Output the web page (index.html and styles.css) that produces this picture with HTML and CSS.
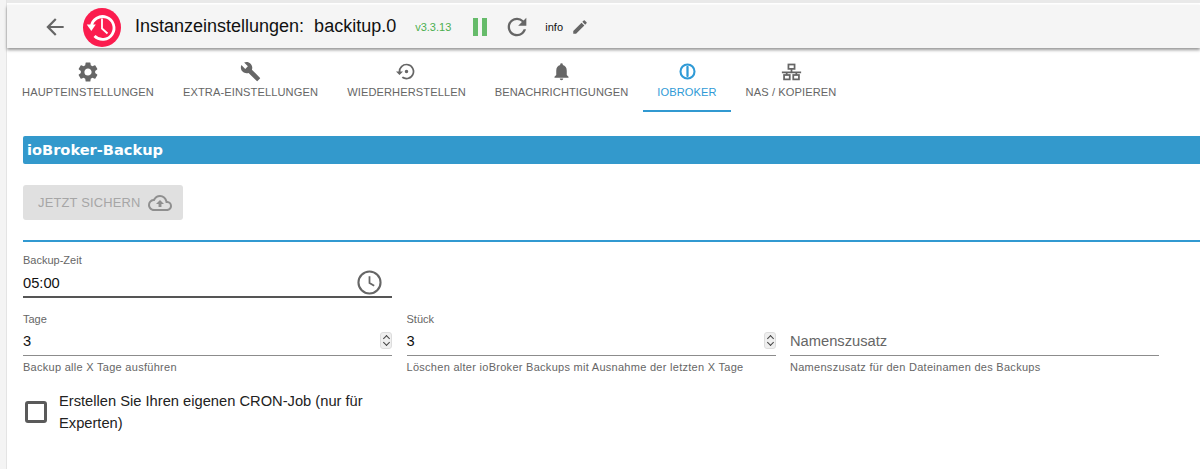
FILE: index.html
```html
<!DOCTYPE html>
<html lang="de">
<head>
<meta charset="utf-8">
<title>Instanzeinstellungen</title>
<link rel="stylesheet" href="styles.css">
</head>
<body>
<div class="page">
  <header class="toolbar">
    <svg class="back" viewBox="0 0 24 24"><path d="M20 11H7.830l5.590-5.590L12 4l-8 8 8 8 1.410-1.410L7.830 13H20v-2z"/></svg>
    <div class="logo">
      <svg viewBox="0 0 38 39"><ellipse cx="19" cy="19.500" rx="19" ry="19.500" fill="#fb1c4e"/><path d="M8.300 18.500A11.400 11.400 0 1 1 11.500 28" fill="none" stroke="#fff" stroke-width="2.800"/><path d="M3.800 16.500h9l-4.500 6.500z" fill="#fff"/><path d="M19 10.500v10l5.500 5" fill="none" stroke="#fff" stroke-width="1.800"/></svg>
    </div>
    <h1 class="title">Instanzeinstellungen:&nbsp; backitup.0</h1>
    <span class="version">v3.3.13</span>
    <span class="pause"><i></i><i></i></span>
    <svg class="reload" viewBox="0 0 24 24"><path d="M17.650 6.350A7.958 7.958 0 0 0 12 4c-4.420 0-7.990 3.580-7.990 8s3.570 8 7.990 8c3.730 0 6.840-2.550 7.730-6h-2.080A5.990 5.990 0 0 1 12 18c-3.310 0-6-2.690-6-6s2.690-6 6-6c1.660 0 3.140.69 4.220 1.780L13 11h7V4l-2.350 2.350z"/></svg>
    <span class="level">info</span>
    <svg class="pencil" viewBox="0 0 24 24"><path d="M3 17.250V21h3.750L17.810 9.940l-3.750-3.750L3 17.250zM20.710 7.040a1 1 0 0 0 0-1.410l-2.340-2.340a1 1 0 0 0-1.410 0l-1.830 1.830 3.750 3.750 1.830-1.830z"/></svg>
  </header>

  <nav class="tabs">
    <div class="tab tab-main">
      <svg class="gear" viewBox="0 0 24 24"><path d="M19.140 12.940c.04-.3.060-.61.060-.94s-.02-.64-.07-.94l2.030-1.580a.49.490 0 0 0 .12-.61l-1.920-3.320a.49.490 0 0 0-.59-.22l-2.390.96c-.5-.38-1.030-.7-1.620-.94l-.36-2.540a.48.480 0 0 0-.48-.41h-3.840a.47.470 0 0 0-.47.410l-.36 2.540c-.59.240-1.130.57-1.620.94l-2.390-.96a.48.480 0 0 0-.59.220L2.740 8.870a.47.470 0 0 0 .12.61l2.030 1.580c-.05.3-.09.63-.09.94s.02.64.07.94l-2.030 1.580a.49.490 0 0 0-.12.61l1.920 3.320c.12.220.37.290.59.220l2.390-.96c.5.380 1.030.7 1.620.94l.36 2.540c.05.240.24.410.48.410h3.840c.24 0 .44-.17.47-.41l.36-2.540c.59-.24 1.130-.56 1.620-.94l2.390.96c.22.080.47 0 .59-.22l1.920-3.320a.47.470 0 0 0-.12-.61l-2.010-1.580zM12 15.600A3.610 3.610 0 0 1 8.400 12c0-1.980 1.620-3.600 3.600-3.600s3.600 1.620 3.600 3.600-1.620 3.600-3.600 3.600z"/></svg>
      <span>Haupteinstellungen</span>
    </div>
    <div class="tab tab-extra">
      <svg viewBox="0 0 24 24"><path d="M22.700 19l-9.100-9.100c.9-2.300.4-5-1.500-6.900-2-2-5-2.400-7.400-1.300L9 6 6 9 1.600 4.700C.4 7.100.9 10.100 2.900 12.100c1.900 1.900 4.600 2.400 6.900 1.500l9.100 9.100c.4.400 1 .4 1.400 0l2.300-2.300c.5-.4.500-1.100.1-1.400z"/></svg>
      <span>Extra-Einstellungen</span>
    </div>
    <div class="tab tab-restore">
      <svg viewBox="0 0 24 24"><path d="M14 12a2 2 0 1 0-2 2 2 2 0 0 0 2-2zm-2-9a9 9 0 0 0-9 9H0l4 4 4-4H5a7 7 0 1 1 2.940 5.700l-1.420 1.440A9 9 0 1 0 12 3z"/></svg>
      <span>Wiederherstellen</span>
    </div>
    <div class="tab tab-notify">
      <svg viewBox="0 0 24 24"><path d="M12 22a2 2 0 0 0 2-2h-4a2 2 0 0 0 2 2zm6-6v-5c0-3.070-1.640-5.640-4.500-6.320V4a1.500 1.500 0 0 0-3 0v.68C7.630 5.360 6 7.920 6 11v5l-2 2v1h16v-1l-2-2z"/></svg>
      <span>Benachrichtigungen</span>
    </div>
    <div class="tab tab-active">
      <svg viewBox="0 0 24 24"><circle cx="12" cy="12" r="8" fill="none" stroke="currentColor" stroke-width="2.400"/><rect x="10.700" y="5.500" width="2.600" height="13" rx="1.300"/></svg>
      <span>ioBroker</span>
    </div>
    <div class="tab tab-nas">
      <svg viewBox="0 0 24 24"><g fill="none" stroke="#666" stroke-width="2"><rect x="8.500" y="4" width="7" height="5"/><rect x="3.500" y="16" width="6.500" height="5"/><rect x="14" y="16" width="6.500" height="5"/><path d="M12 9v4M1 13h22M6.500 13v3M17.500 13v3"/></g></svg>
      <span>NAS / Kopieren</span>
    </div>
  </nav>

  <main class="content">
    <h2 class="banner">ioBroker-Backup</h2>
    <button class="action" type="button" disabled>
      <span>Jetzt sichern</span>
      <svg viewBox="0 0 24 24"><path d="M19.350 10.040A7.490 7.490 0 0 0 12 4C9.110 4 6.600 5.640 5.350 8.040A5.994 5.994 0 0 0 0 14c0 3.310 2.690 6 6 6h13c2.760 0 5-2.240 5-5 0-2.640-2.050-4.780-4.650-4.960zM19 18H6c-2.210 0-4-1.790-4-4 0-2.050 1.530-3.760 3.560-3.970l1.070-.11.500-.95A5.469 5.469 0 0 1 12 6c2.620 0 4.880 1.860 5.390 4.430l.3 1.500 1.530.11A2.980 2.980 0 0 1 22 15c0 1.650-1.350 3-3 3zM8 13h2.550v3h2.900v-3H16l-4-4-4 4z"/></svg>
    </button>
    <hr class="rule">

    <div class="field time-field">
      <label>Backup-Zeit</label>
      <div class="value">05:00
        <svg class="clock" viewBox="0 0 24 24"><circle cx="12" cy="12" r="10.600" fill="none" stroke="#666" stroke-width="2"/><path d="M12 6v6.500l4.500 2.700" fill="none" stroke="#666" stroke-width="1.700"/></svg>
      </div>
    </div>

    <div class="row">
      <div class="field">
        <label>Tage</label>
        <div class="value soft">3<span class="spin"></span></div>
        <p class="help">Backup alle X Tage ausführen</p>
      </div>
      <div class="field">
        <label>Stück</label>
        <div class="value soft">3<span class="spin"></span></div>
        <p class="help">Löschen alter ioBroker Backups mit Ausnahme der letzten X Tage</p>
      </div>
      <div class="field">
        <label class="blank">&nbsp;</label>
        <div class="value soft placeholder">Namenszusatz</div>
        <p class="help">Namenszusatz für den Dateinamen des Backups</p>
      </div>
    </div>

    <div class="check">
      <span class="box"></span>
      <span class="check-label">Erstellen Sie Ihren eigenen CRON-Job (nur für Experten)</span>
    </div>
  </main>
</div>
</body>
</html>
```
FILE: styles.css
```css
* { box-sizing: border-box; }
html, body { margin: 0; height: 100%; overflow: hidden; background: #fff; }
body { font-family: "Liberation Sans", Arial, sans-serif; color: #111; }
.page { height: 469px; margin-left: 6px; border-left: 1px solid #e4e4e4; padding-top: 5px; position: relative; background: #fff; box-shadow: -6px 0 0 #f4f4f4; }
.page::before { content: ""; position: absolute; top: 0; left: 0; right: 0; height: 3px; background: #e9e9e9; }
.toolbar { height: 43px; display: flex; align-items: center; background: #f5f5f5; box-shadow: 0 2px 3px rgba(0,0,0,.42); position: relative; padding-left: 35px; }
.back { width: 26px; height: 26px; fill: #666; }
.logo { width: 38px; height: 39px; margin-left: 15px; margin-top: 1px; }
.logo svg { display: block; width: 100%; height: 100%; }
.title { margin: 0 0 0 14px; font-size: 18px; font-weight: 400; color: #111; white-space: nowrap; }
.version { margin-left: 19px; font-size: 11px; color: #4caf50; }
.pause { display: flex; gap: 4px; margin-left: 22px; }
.pause i { display: block; width: 5px; height: 18px; background: #66bb6a; }
.reload { width: 28px; height: 28px; fill: #666; margin-left: 16px; }
.level { font-size: 11px; margin-left: 14px; }
.pencil { width: 18px; height: 18px; fill: #666; margin-left: 8px; }
.tabs { display: flex; height: 65px; padding-left: 1px; }
.tab { height: 64px; display: flex; flex-direction: column; align-items: center; padding-top: 13px; font-size: 11.100px; color: #666; text-transform: uppercase; letter-spacing: .1px; white-space: nowrap; }
.tab svg { width: 21px; height: 21px; fill: #666; }
.tab svg.gear { width: 24px; height: 24px; margin: -1.500px 0; }
.tab span { margin-top: 4px; }
.tab-main { width: 160px; }
.tab-extra { width: 165px; }
.tab-restore { width: 147px; }
.tab-notify { width: 163px; }
.tab-active { width: 88px; color: #2f9ad6; border-bottom: 2px solid #3199d1; }
.tab-active svg { fill: #2f9ad6; color: #2f9ad6; }
.tab-nas { width: 120px; }
.content { padding: 23px 0 0 16px; }
.banner { margin: 0; height: 28px; padding-left: 4px; background: #3399cc; color: #fff; font: 700 14.600px/27px "DejaVu Sans", sans-serif; border-radius: 2px 0 0 2px; }
.action { display: flex; align-items: center; gap: 7px; width: 160px; height: 35px; margin-top: 21px; padding: 0 0 0 15px; border: 0; border-radius: 3px; background: #e0e0e0; color: #a6a6a6; font: 12.900px "Liberation Sans", sans-serif; text-transform: uppercase; letter-spacing: .2px; }
.action svg { width: 24px; height: 24px; fill: #8f8f8f; }
.rule { margin: 20px 0 0; border: 0; border-top: 2px solid #3199d1; height: 0; }
.field { width: 369px; }
.field label { display: block; font-size: 11px; line-height: 13px; color: #666; }
.time-field { margin-top: 12px; }
.value { display: flex; align-items: center; justify-content: space-between; height: 28px; margin-top: 3px; font-size: 14.700px; color: #111; border-bottom: 2px solid #555; }
.clock { width: 25px; height: 25px; margin-right: 10px; margin-top: -2px; }
.value.soft { height: 27px; border-bottom: 1px solid #8c8c8c; margin-top: 3px; padding-bottom: 3px; }
.row { display: flex; gap: 14.500px; margin-top: 15px; }
.placeholder { color: #666; }
.help { margin: 5px 0 0; font-size: 11px; line-height: 13px; color: #666; letter-spacing: .28px; white-space: nowrap; }
.spin { width: 12px; height: 17px; border-radius: 3px; background: #efefef; border: 1px solid #ddd; position: relative; }
.spin::before, .spin::after { content: ""; position: absolute; left: 3px; width: 4px; height: 4px; border: solid #444; border-width: 1px 0 0 1px; }
.spin::before { top: 3px; transform: rotate(45deg); }
.spin::after { bottom: 3px; transform: rotate(225deg); }
.check { display: flex; align-items: center; width: 369px; margin-top: 16px; padding-left: 2px; }
.box { width: 22px; height: 22px; flex: none; border: 3px solid #5a5a5a; border-radius: 3px; }
.check-label { margin-left: 12px; font-size: 14.700px; line-height: 22px; color: #222; }
```
